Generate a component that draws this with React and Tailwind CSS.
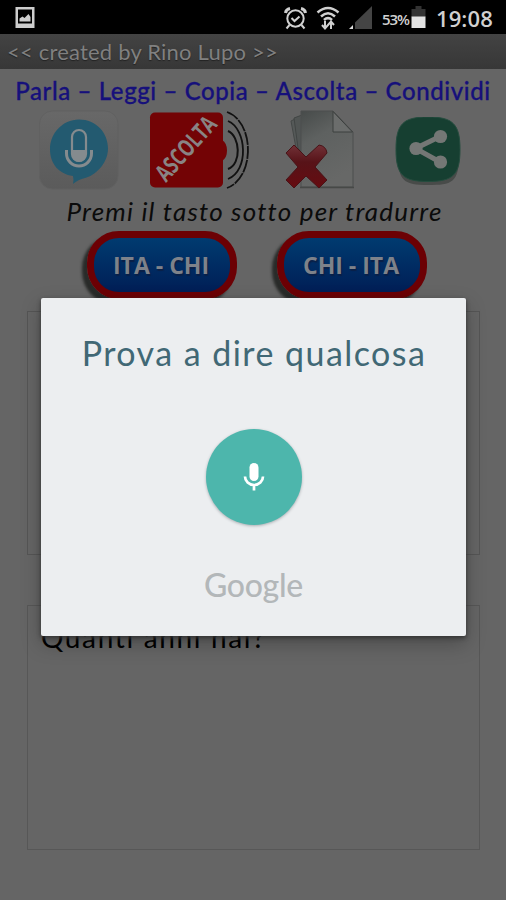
import React from "react";

function StatusBar() {
  return (
    <header className="flex h-[34px] shrink-0 items-center bg-black pl-[15px] pr-3 text-[#d0d0d0]">
      <svg width="21" height="23" viewBox="0 0 21 23">
        <path fillRule="evenodd" fill="#cdcdcd" d="M0.500 1h19v21H0.500zM3 3.500v14h14v-14z" />
        <path fill="#cdcdcd" d="M4.500 15.500v-3l3-2 2 1.500 4-4 2 3v4.500z" />
      </svg>
      <svg width="23" height="24" viewBox="0 0 23 24" className="ml-[248px] mt-px" fill="none" stroke="#d0d0d0" strokeWidth="2">
        <circle cx="11.5" cy="12.500" r="8.2" />
        <path d="M7.5 12l3 3 5-4.500M5.500 19l-3 3.500M17.500 19l3 3.500" />
        <path strokeWidth="3" d="M1.500 7Q2 3.300 6 2.500M21.500 7Q21 3.300 17 2.500" />
      </svg>
      <svg width="24" height="26" viewBox="0 0 24 26" className="ml-[9px] mt-0.5" fill="none" stroke="#d0d0d0" strokeWidth="2.500">
        <path d="M1.500 7.500Q12 -1.500 22.500 7.500M5 11.500Q12 5 19 11.500M8 15q4-3.800 8 0" />
        <path strokeWidth="2" d="M9 16v7M6 20l3 3.500 3-3.500M15 24v-7M12 20l3-3.500 3 3.500" />
      </svg>
      <svg width="25" height="24" viewBox="0 0 25 24" className="ml-[8px] mt-px">
        <path fill="#444" d="M24 0v23H7V16.500z" />
        <path fill="#ddd" d="M1 23l4-4v4z" />
      </svg>
      <span className="ml-[9px] w-[29px] whitespace-nowrap pt-1 font-['Open_Sans',sans-serif] text-[15px] font-semibold tracking-[-1.1px]">53%</span>
      <svg width="15" height="22" viewBox="0 0 15 22">
        <path fill="#333" d="M0.500 3h4V0h6v3h4v8h-14z" />
        <path fill="#e2e2e2" d="M0.500 10.500h14V22h-14z" />
      </svg>
      <span className="ml-[10px] whitespace-nowrap pt-0.5 font-['Open_Sans',sans-serif] text-[22px] font-semibold leading-none tracking-[0.1px]">19:08</span>
    </header>
  );
}

function SpeakIcon() {
  return (
    <svg width="80" height="80" viewBox="0 0 80 80">
      <defs>
        <linearGradient id="tile" x1="0" y1="0" x2="0" y2="1">
          <stop offset="0" stopColor="#686868" />
          <stop offset="1" stopColor="#5b5b5b" />
        </linearGradient>
      </defs>
      <rect x="0.500" y="1" width="78.500" height="78" rx="13" fill="url(#tile)" stroke="#616161" />
      <path fill="#235a70" d="M40 9.500c17 0 29 13 29 29S55 66 46 68q-7 1.500-12 6 1-4 0-8C20 64 11 54 11 39S23 9.500 40 9.500z" />
      <g fill="none" stroke="#858b8e">
        <path d="M27.500 40v3.500a12.500 12.500 0 0 0 25 0V40" strokeWidth="3" />
        <rect x="33" y="20" width="14" height="31" rx="7" strokeWidth="2.200" />
      </g>
      <path fill="#858b8e" d="M33 40h14v5a7 7 0 0 1-14 0z" />
    </svg>
  );
}

function ListenIcon() {
  return (
    <svg width="100" height="80" viewBox="0 0 100 80" className="overflow-visible">
      <rect x="1" y="2.500" width="73" height="75" rx="5" fill="#730305" />
      <path fill="#730305" d="M73 30q5 3 5 10.500T73 51z" />
      <text x="0" y="0" transform="translate(17 73) rotate(-48)" textLength="78" lengthAdjust="spacingAndGlyphs" fill="#898484" fontFamily="Open Sans, sans-serif" fontWeight="700" fontSize="24">ASCOLTA</text>
      <g fill="none" stroke="#111" strokeWidth="2">
        <path d="M79 21c12 5 14 33 0 38" />
        <path strokeWidth="1.800" d="M79 11c19 8 21 50 0 58" />
        <path strokeWidth="1.800" d="M78 2c28 10 28 66 0 76" strokeDasharray="13 1" />
      </g>
    </svg>
  );
}

function DeleteIcon() {
  return (
    <svg width="72" height="80" viewBox="0 0 72 80">
      <defs>
        <linearGradient id="sheet" x1="0" y1="0" x2="0.400" y2="1">
          <stop offset="0" stopColor="#474b4a" />
          <stop offset="0.400" stopColor="#5e6160" />
          <stop offset="1" stopColor="#676867" />
        </linearGradient>
        <linearGradient id="cross" x1="0" y1="0" x2="0" y2="1">
          <stop offset="0" stopColor="#713137" />
          <stop offset="0.400" stopColor="#571318" />
          <stop offset="1" stopColor="#660b10" />
        </linearGradient>
      </defs>
      <path fill="#555958" stroke="#444847" d="M6 11l10-5v39L11 38z" />
      <path fill="#515554" stroke="#414544" d="M9 8l8-3v38l-4-5z" />
      <path fill="url(#sheet)" stroke="#4c4f4e" d="M16 1h32l20 21v55H16z" />
      <path fill="#6b6d6c" stroke="#3d403f" d="M48 1.500V22h19.500z" />
      <path stroke="#474947" strokeWidth="1.500" d="M15 77.500h54" />
      <path fill="url(#cross)" stroke="#481317" strokeLinejoin="round" d="M9 35l12 12 13-12q7 1 8 8L30 57l12 13-8 8-13-12L9 78l-8-8 12-13L1 43z" />
    </svg>
  );
}

function ShareIcon() {
  return (
    <svg width="68" height="72" viewBox="0 0 68 72">
      <path fill="#484b49" d="M3 38C3 4 9 5 33 5s31 5 31 33-7 30-31 30S3 64 3 38z" />
      <path fill="#163f31" stroke="#244c3e" d="M1 32.500C1 7 8 0 33 0s32 7 32 32.500S58 64.500 33 64.500 1 58 1 32.500z" />
      <path stroke="#747775" strokeWidth="5" d="M45 19.500L20.500 31.500 45 45" fill="none" />
      <g fill="#747775"><circle cx="45.500" cy="19.500" r="6.600" /><circle cx="21" cy="31.500" r="6.600" /><circle cx="45.500" cy="45" r="6.600" /></g>
    </svg>
  );
}

function LangButton({ label }) {
  return (
    <button className="flex h-[68px] w-[150px] items-center justify-center rounded-[32px] border-[7px] border-[#6c0004] bg-linear-to-b from-[#003b70] to-[#001e56] shadow-[-5px_5px_3px_#292b29] font-['Open_Sans',sans-serif] text-[23px] font-bold text-[#7e828a] [text-shadow:1px_2px_1px_#092048]">
      <span className="-ml-0.5 whitespace-nowrap">{label}</span>
    </button>
  );
}

function VoiceDialog() {
  return (
    <section className="absolute left-[41px] top-[298px] flex h-[338px] w-[425px] flex-col items-center rounded-[2px] bg-[#eceef0] shadow-[0_2px_4px_#333,0_8px_20px_rgba(0,0,0,0.25)]">
      <h1 className="mt-[33px] h-[44px] whitespace-nowrap pl-px font-['Lato',sans-serif] text-[34px] font-normal leading-[44px] tracking-[1.45px] text-[#416875]">Prova a dire qualcosa</h1>
      <div className="mt-[54px] flex size-[96px] items-center justify-center rounded-full bg-[#4db6ac] shadow-[0_1px_3px_#a9aeb2]">
        <svg width="22" height="30" viewBox="0 0 22 30">
          <rect x="6.500" y="1" width="9" height="18" rx="4.500" fill="#fff" />
          <path d="M2 14.500a9 8.500 0 0 0 18 0M11 23v5.500" fill="none" stroke="#fff" strokeWidth="2.700" />
        </svg>
      </div>
      <div className="mt-[38px] h-[44px] whitespace-nowrap font-['Lato',sans-serif] text-[32px] font-medium leading-[44px] tracking-[-0.3px] text-[#b3b7b9]">Google</div>
    </section>
  );
}

export default function App() {
  return (
    <main className="relative flex h-[900px] w-[506px] flex-col overflow-hidden bg-[#656565] font-['Lato',sans-serif]">
      <StatusBar />
      <div className="flex h-[35px] shrink-0 items-center whitespace-nowrap bg-linear-to-b from-[#434343] to-[#373737] pl-[7px] text-[22px] tracking-[0.2px] text-[#808080] [text-shadow:0_1px_1px_#222]">&lt;&lt; created by Rino Lupo &gt;&gt;</div>
      <p className="mt-[5px] h-[34px] whitespace-nowrap text-center text-[24px] font-medium leading-[34px] tracking-[0.6px] text-[#16107b] [-webkit-text-stroke:0.3px_#16107b]">Parla – Leggi – Copia – Ascolta – Condividi</p>
      <nav className="flex h-[84px] shrink-0 items-start pl-[39px] pt-[2px]">
        <SpeakIcon />
        <div className="ml-[30px]"><ListenIcon /></div>
        <div className="ml-[36px]"><DeleteIcon /></div>
        <div className="ml-[38px] mt-[7px]"><ShareIcon /></div>
      </nav>
      <p className="mt-[3px] h-[32px] whitespace-nowrap pl-[3px] text-center text-[26px] italic leading-[32px] tracking-[1.2px] text-[#0b0b0b]">Premi il tasto sotto per tradurre</p>
      <div className="mt-[4px] flex shrink-0 gap-[40px] pl-[87px]">
        <LangButton label="ITA - CHI" />
        <LangButton label="CHI - ITA" />
      </div>
      <div className="ml-[27px] mr-[26px] mt-[12px] h-[244px] shrink-0 border border-[#555]" />
      <div className="ml-[27px] mr-[26px] mt-[50px] h-[245px] shrink-0 border border-[#575757] pl-[13px] pt-[13px] text-[28px] leading-[36px] tracking-[1.65px] text-black">Quanti anni hai?</div>
      <VoiceDialog />
    </main>
  );
}
